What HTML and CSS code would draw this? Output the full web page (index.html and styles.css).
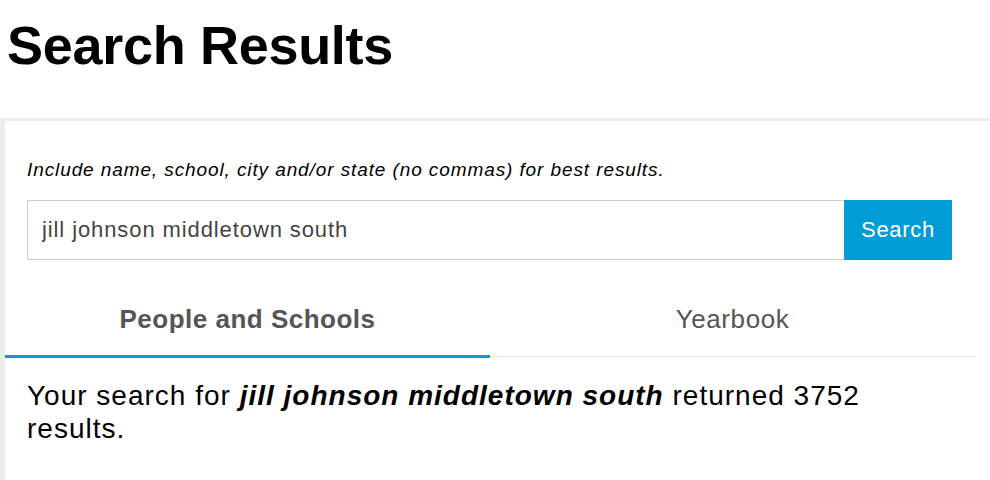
FILE: index.html
```html
<!DOCTYPE html>
<html lang="en">
  <head>
    <meta charset="UTF-8" />
    <meta name="viewport" content="width=device-width, initial-scale=1.0" />
    <title>Search Results</title>
    <link rel="stylesheet" href="styles.css">
  </head>
  <body>
    <h1 class="page-title">Search Results</h1>

    <div class="results-panel">
      <div class="search-box">
        <p class="hint">Include name, school, city and/or state (no commas) for best results.</p>
        <form class="search-form" onsubmit="return false;">
          <input class="search-input" type="text" value="jill johnson middletown south" />
          <button class="search-btn" type="submit">Search</button>
        </form>
      </div>

      <div class="tabs">
        <div class="tab active">People and Schools</div>
        <div class="tab">Yearbook</div>
      </div>

      <p class="summary">
        Your search for <b class="query">jill johnson middletown south</b> returned 3752<br>results.
      </p>
    </div>
  </body>
</html>
```

FILE: styles.css
```css
* {
  box-sizing: border-box;
}

body {
  margin: 0;
  font-family: "Liberation Sans", Arial, sans-serif;
  color: #000;
  background: #fff;
}

.page-title {
  margin: 0;
  padding: 17px 0 0 7px;
  height: 118px;
  font-size: 54px;
  line-height: 56px;
  font-weight: bold;
  letter-spacing: -0.3px;
}

.results-panel {
  border-top: 3px solid #ececec;
  border-left: 5px solid #ececec;
  width: 990px;
  min-height: 362px;
}

.search-box {
  padding: 37px 38px 0 22px;
}

.hint {
  margin: 0 0 18px;
  font-size: 19px;
  font-style: italic;
  line-height: 24px;
  letter-spacing: 0.9px;
}

.search-form {
  display: flex;
  height: 60px;
}

.search-input {
  flex: 1;
  height: 60px;
  margin: 0;
  padding: 0 14px;
  border: 1px solid #ccc;
  border-right: none;
  border-radius: 0;
  font-family: inherit;
  font-size: 22px;
  letter-spacing: 0.9px;
  color: #444;
  outline: none;
}

.search-btn {
  width: 108px;
  height: 60px;
  margin: 0;
  padding: 0;
  border: none;
  border-radius: 0;
  background: #009cd6;
  color: #fff;
  font-family: inherit;
  font-size: 22px;
  letter-spacing: 0.7px;
  cursor: pointer;
}

.tabs {
  display: flex;
  width: 970px;
  margin-top: 20px;
}

.tab {
  flex: 1;
  text-align: center;
  font-size: 26px;
  line-height: 30px;
  letter-spacing: 0.6px;
  padding: 24px 0 22px;
  color: #555;
  border-bottom: 1px solid #e6e6e6;
}

.tab.active {
  font-weight: bold;
  letter-spacing: 0.5px;
  padding-bottom: 21px;
  border-bottom: 3px solid #0a9bd3;
  margin-bottom: -1px;
}

.summary {
  margin: 0;
  padding: 22px 38px 0 22px;
  font-size: 28px;
  line-height: 33px;
  letter-spacing: 1px;
}

.query {
  font-weight: bold;
  font-style: italic;
}
```
